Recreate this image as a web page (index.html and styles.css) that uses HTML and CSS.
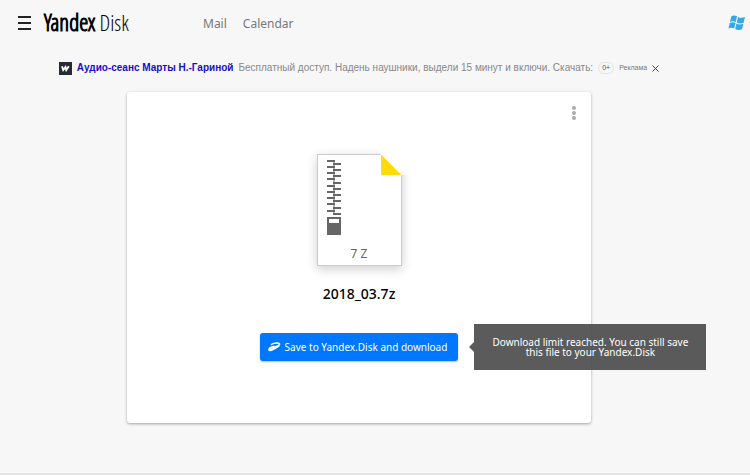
FILE: index.html
```html
<!DOCTYPE html>
<html lang="en">
<head>
<meta charset="utf-8">
<meta name="viewport" content="width=device-width, initial-scale=1">
<title>2018_03.7z — Yandex Disk</title>
<link rel="stylesheet" href="styles.css">
</head>
<body>
<header class="header">
  <button class="menu" type="button" aria-label="Menu"><span></span><span></span><span></span></button>
  <a class="logo" href="#"><b>Yandex</b> Disk</a>
  <nav class="nav">
    <a href="#">Mail</a>
    <a href="#">Calendar</a>
  </nav>
  <a class="windows" href="#" aria-label="Windows app">
    <svg width="18" height="16" viewBox="0 0 18 16" fill="#34a9e8"><path d="M3.2 1.4C5 .2 7 .2 9 1.3L7.700 7C5.800 6 4 6 2 7.100zM10 1.900C12 3 14.500 3.100 17 2L15.600 7.700C13.400 8.800 11 8.700 8.700 7.500zM1.800 8C3.700 6.900 5.600 7 7.500 8L6.200 13.400C4.400 12.400 2.500 12.500.5 13.600zM8.500 8.500C10.800 9.700 13 9.700 15.400 8.700L14 14.200C11.800 15.300 9.400 15.200 7.200 14z"/></svg>
  </a>
</header>
<main class="main">
  <div class="ad">
    <svg class="ad-icon" width="13" height="13" viewBox="0 0 13 13"><path fill="#252c36" d="M0 0h13v13H0z"/><path fill="none" stroke="#fff" stroke-width="1.800" d="M3 4.300l1.200 3.700L6.500 5l.8 3L9.800 4.300"/></svg>
    <a class="ad-title" href="#">Аудио-сеанс Марты Н.-Гариной</a>
    <span class="ad-text">Бесплатный доступ. Надень наушники, выдели 15 минут и включи. Скачать:</span>
    <span class="age">0+</span>
    <span class="ad-label">Реклама</span>
    <button class="close" type="button" aria-label="Close"><svg width="7" height="7" viewBox="0 0 7 7"><path d="M.5.5l6 6M6.500.5l-6 6" stroke="#444" fill="none"/></svg></button>
  </div>
  <section class="card">
    <button class="more" type="button" aria-label="More"><span></span><span></span><span></span></button>
    <div class="file">
      <svg class="zip" width="14" height="75" viewBox="0 0 14 75" fill="#666"><path d="M0 0h8v2H0zM0 6h8v2H0zM0 12h8v2H0zM0 18h8v2H0zM0 25h8v2H0zM0 31h8v2H0zM0 37h8v2H0zM0 43h8v2H0zM0 50h8v2H0zM6 3h8v2H6zM6 9h8v2H6zM6 15h8v2H6zM6 22h8v2H6zM6 28h8v2H6zM6 34h8v2H6zM6 40h8v2H6zM6 47h8v2H6zM6 53h8v2H6z"/><path d="M6 1h2v53H6z" opacity=".5"/><path fill-rule="evenodd" d="M0 57h14v18H0zM2 59v4h10v-4z"/></svg>
      <span class="type">7 Z</span>
    </div>
    <h1 class="name">2018_03.7z</h1>
    <div class="action">
      <button class="save" type="button">
        <svg width="13" height="10" viewBox="0 0 13 10" fill="none" stroke="#fff"><path stroke-width="1.500" d="M3 2.800C5 1 11.300.3 11.600 2 11.800 3.600 8 5 4.500 5"/><path stroke-width="2" d="M11 3.400C7 6.500 1.500 9.500 1.200 7.800 1 6.500 4 5 6.500 4.500"/></svg>
        Save to Yandex.Disk and download
      </button>
      <div class="tip" role="tooltip">Download limit reached. You can still save this file to your Yandex.Disk</div>
    </div>
  </section>
</main>
<footer class="footer"></footer>
</body>
</html>
```
FILE: styles.css
```css
* { box-sizing: border-box; }
body {
  margin: 0;
  min-height: 100vh;
  display: flex;
  flex-direction: column;
  background: #f7f7f7;
  color: #000;
  font-family: "Noto Sans", "Open Sans", sans-serif;
}
button { margin: 0; padding: 0; border: 0; background: none; font: inherit; cursor: pointer; }
a { color: inherit; text-decoration: none; }
svg { display: block; flex: none; }

.header { display: flex; align-items: center; height: 46px; padding: 0 4px 0 18px; }
.menu { display: flex; flex-direction: column; gap: 4px; width: 13px; }
.menu span { height: 2px; background: #222; }
.logo {
  margin-left: 13px;
  width: 88px;
  padding-bottom: 2px;
  font: 300 22px/28px "Open Sans Condensed Light", "Open Sans Condensed", sans-serif;
  white-space: nowrap;
}
.logo b { font-weight: 300; font-size: 23px; -webkit-text-stroke: 1px #000; }
.nav { display: flex; gap: 16px; margin-left: 71px; padding-top: 2px; color: #777; font-size: 12px; line-height: 20px; }
.windows { margin-left: auto; }

.main { display: flex; flex-direction: column; align-items: center; padding: 12px 32px 0 0; }
.ad {
  display: flex;
  align-items: center;
  height: 20px;
  font: 10px/20px "Liberation Sans", sans-serif;
  white-space: nowrap;
}
.ad-title { margin-left: 5px; color: #1a0dc4; font-weight: bold; }
.ad-text { margin-left: 5px; color: #888; }
.age {
  margin-left: 5px;
  padding: 0 3px;
  border: 1px solid #e4e4e4;
  border-radius: 6px;
  font-size: 7px;
  line-height: 10px;
  color: #555;
}
.ad-label { margin-left: 5px; font-size: 7px; color: #777; }
.close { margin-left: 5px; }

.card {
  position: relative;
  display: flex;
  flex-direction: column;
  align-items: center;
  width: 100%;
  max-width: 464px;
  margin-top: 14px;
  padding: 62px 0;
  border-radius: 3px;
  background: #fff;
  box-shadow: 0 1px 3px rgba(0, 0, 0, .35);
}
.more { position: absolute; top: 14px; right: 15px; display: grid; gap: 1px; }
.more span { width: 4px; height: 4px; border-radius: 50%; background: #aaa; }

.file {
  display: flex;
  flex-direction: column;
  justify-content: space-between;
  width: 85px;
  height: 112px;
  padding: 5px 9px 2px;
  border: 1px solid #ccc;
  background: linear-gradient(#ffdb0d, #ffdb0d) top right / 20px 20px no-repeat, #fff;
  clip-path: polygon(-20px -20px, 64px -20px, 64px 0, 85px 21px, 105px 21px, 105px 132px, -20px 132px);
  box-shadow: 0 3px 10px rgba(0, 0, 0, .2);
}
.type { color: #666; font-size: 12px; line-height: 18px; text-align: center; }
.name { margin: 18px 0 0; font-size: 14px; line-height: 20px; font-weight: 500; }
.action { position: relative; margin-top: 29px; }
.save {
  display: flex;
  align-items: center;
  gap: 4px;
  height: 28px;
  padding: 0 11px 0 8px;
  border-radius: 3px;
  background: #0077ff;
  box-shadow: 0 1px 2px rgba(0, 0, 0, .25);
  color: #fff;
  font-size: 10px;
  white-space: nowrap;
}
.tip {
  position: absolute;
  left: calc(100% + 16px);
  top: -9px;
  width: 232px;
  padding: 13px 16px;
  background: rgba(68, 68, 68, .88);
  color: #fff;
  font-size: 10px;
  line-height: 10px;
  text-align: center;
}
.tip::before {
  content: "";
  position: absolute;
  right: 100%;
  top: 18px;
  border: 5px solid transparent;
  border-left: 0;
  border-right-color: rgba(68, 68, 68, .88);
}
.footer { height: 2px; margin-top: auto; background: #e4e4e4; }
```
